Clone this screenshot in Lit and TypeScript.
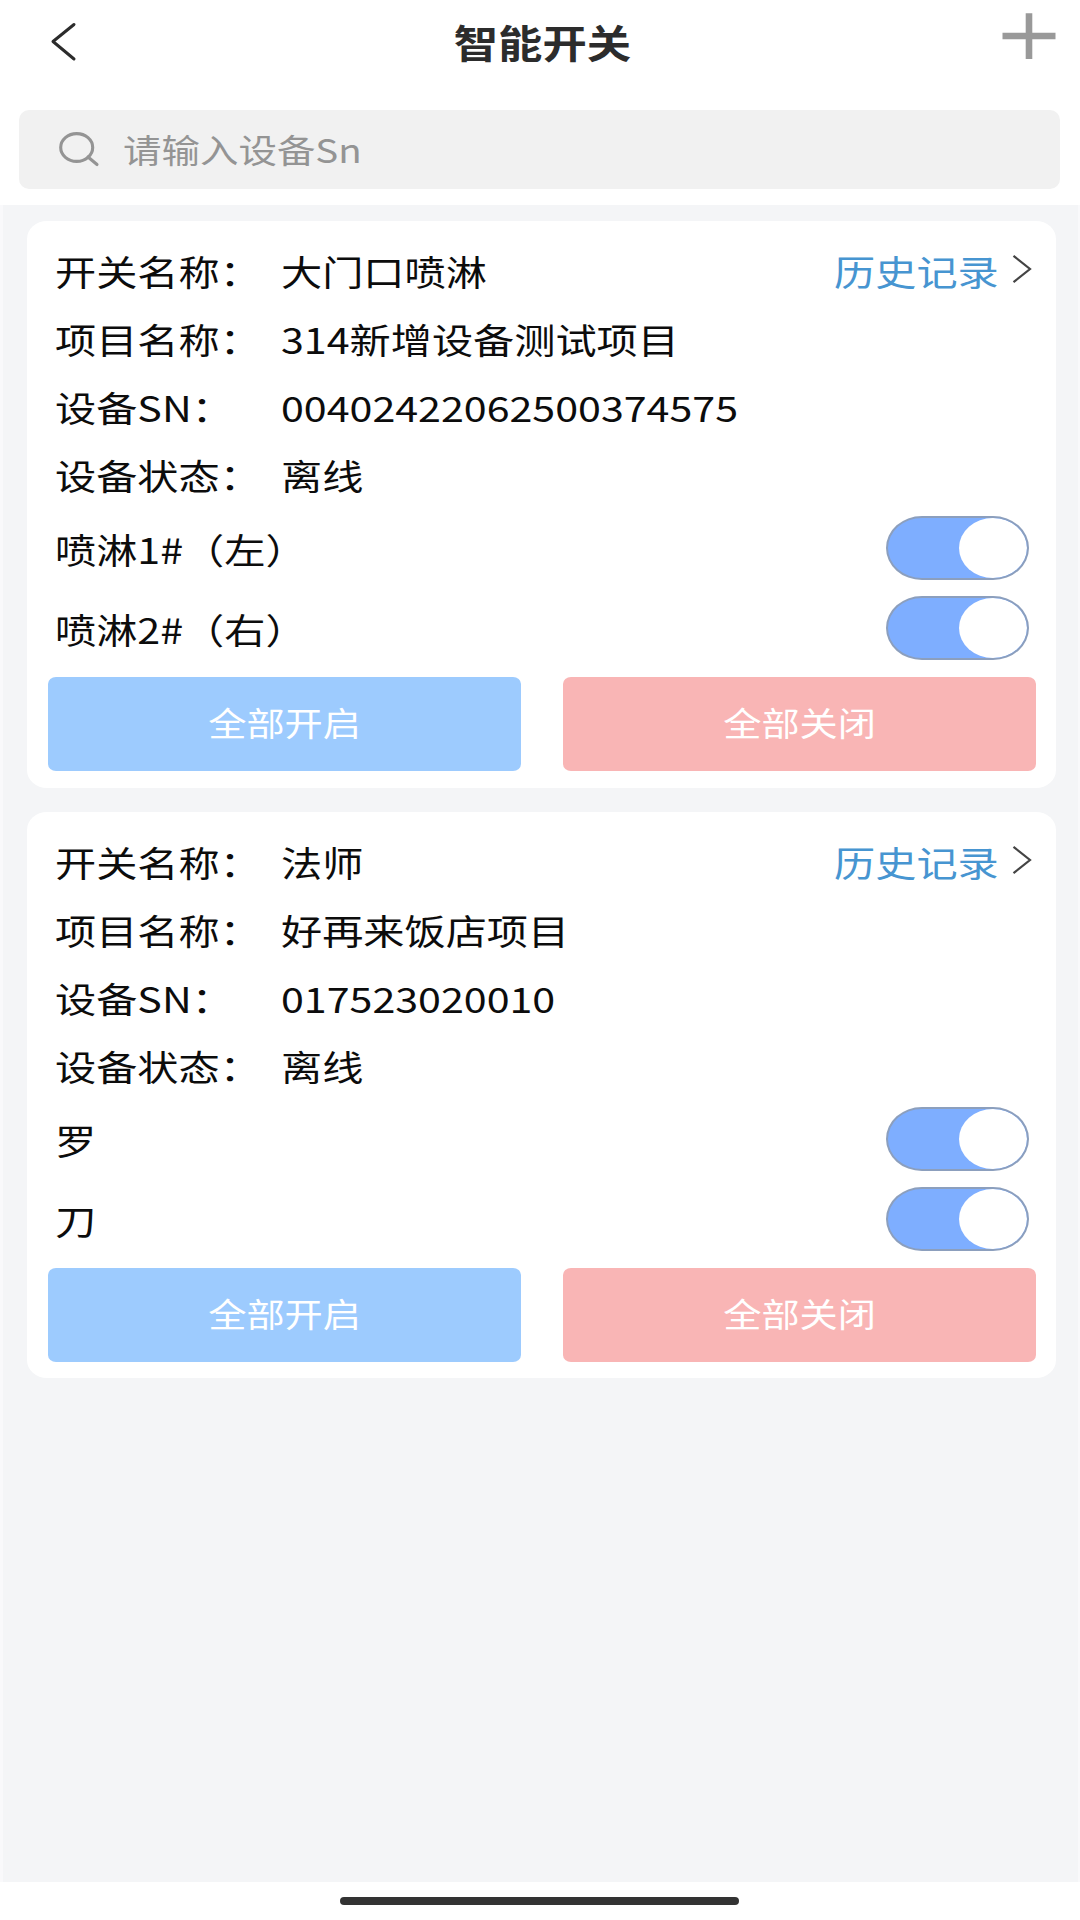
import { LitElement, html, css } from "lit";
import { customElement, property } from "lit/decorators.js";

interface Device {
  name: string;
  project: string;
  sn: string;
  status: string;
  switches: string[];
}

const DEVICES: Device[] = [
  {
    name: "大门口喷淋",
    project: "314新增设备测试项目",
    sn: "00402422062500374575",
    status: "离线",
    switches: ["喷淋1#（左）", "喷淋2#（右）"],
  },
  {
    name: "法师",
    project: "好再来饭店项目",
    sn: "017523020010",
    status: "离线",
    switches: ["罗", "刀"],
  },
];

@customElement("toggle-switch")
class ToggleSwitch extends LitElement {
  static styles = css`
    :host {
      display: block;
    }
    .track {
      box-sizing: border-box;
      display: flex;
      justify-content: flex-end;
      width: 143px;
      height: 64px;
      border: 2px solid #8c9fbd;
      border-radius: 36px / 32px;
      background: #7eaeff;
      overflow: hidden;
    }
    .knob {
      width: 68px;
      height: 60px;
      border-radius: 50%;
      background: #fff;
    }
  `;
  render() {
    return html`<div class="track"><div class="knob"></div></div>`;
  }
}

@customElement("device-card")
class DeviceCard extends LitElement {
  @property({ attribute: false }) device!: Device;

  static styles = css`
    :host {
      display: block;
    }
    .card {
      box-sizing: border-box;
      height: 566.5px;
      padding: 16px 20px 0 21px;
      border-radius: 20px / 18px;
      background: #fff;
    }
    .row {
      display: flex;
      align-items: center;
      height: 68px;
      padding: 0 7px;
    }
    .label {
      width: 226px;
      flex: none;
    }
    .value {
      flex: 1;
    }
    .text {
      display: inline-block;
      font-size: 35.2px;
      line-height: 68px;
      white-space: nowrap;
      color: #0c0c0c;
      transform: scaleX(1.17);
      transform-origin: left center;
    }
    .link {
      display: flex;
      align-items: center;
      gap: 13px;
    }
    .link .text {
      color: #4795d1;
      transform-origin: right center;
    }
    .arrow {
      display: block;
      width: 20px;
      height: 30px;
      margin: -4px -3px 0 0;
    }
    .switches {
      margin-top: -1px;
    }
    .switch-row {
      display: flex;
      align-items: center;
      justify-content: space-between;
      height: 80px;
      padding: 0 7px;
    }
    .switch-row .text {
      line-height: 78px;
      padding-top: 2px;
    }
    .buttons {
      display: flex;
      gap: 42px;
      margin-top: 9px;
    }
    .button {
      flex: 1;
      height: 94px;
      border-radius: 8px / 7px;
      color: #fff;
      text-align: center;
      font-size: 32.8px;
      line-height: 89px;
    }
    .button span {
      display: inline-block;
      transform: scaleX(1.165);
    }
    .on {
      background: #9dcbfe;
    }
    .off {
      background: #f9b5b5;
    }
  `;

  private field(label: string, value: string) {
    return html`<div class="label"><span class="text">${label}</span></div>
      <div class="value"><span class="text">${value}</span></div>`;
  }

  render() {
    const d = this.device;
    return html`<div class="card">
      <div class="row">
        ${this.field("开关名称：", d.name)}
        <div class="link">
          <span class="text">历史记录</span>
          <svg class="arrow" viewBox="0 0 20 30">
            <path d="M1.5 1.8 L18 15 L1.5 28.2" fill="none" stroke="#444" stroke-width="2.2" />
          </svg>
        </div>
      </div>
      <div class="row">${this.field("项目名称：", d.project)}</div>
      <div class="row">${this.field("设备SN：", d.sn)}</div>
      <div class="row">${this.field("设备状态：", d.status)}</div>
      <div class="switches">
        ${d.switches.map(
          (s) => html`<div class="switch-row">
            <span class="text">${s}</span><toggle-switch></toggle-switch>
          </div>`
        )}
      </div>
      <div class="buttons">
        <div class="button on"><span>全部开启</span></div>
        <div class="button off"><span>全部关闭</span></div>
      </div>
    </div>`;
  }
}

@customElement("app-root")
class AppRoot extends LitElement {
  static styles = css`
    :host {
      display: block;
      font-family: "Noto Sans CJK SC", sans-serif;
    }
    .page {
      display: flex;
      flex-direction: column;
      width: 1080px;
      height: 1920px;
      background: #fff;
      overflow: hidden;
    }
    .header {
      box-sizing: border-box;
      display: grid;
      grid-template-columns: 40px 1fr 60px;
      align-items: start;
      height: 110px;
      padding: 0 22px 0 46px;
    }
    .back {
      width: 34px;
      height: 44px;
      margin-top: 20px;
    }
    .title {
      text-align: center;
      color: #2c2c2c;
      font-size: 38.2px;
      font-weight: 700;
      line-height: 83px;
    }
    .title span {
      display: inline-block;
      transform: scaleX(1.16);
    }
    .plus {
      width: 56px;
      height: 50px;
      margin: 11px 0 0 2px;
    }
    .search {
      display: flex;
      align-items: center;
      height: 79px;
      margin: 0 20px 0 19px;
      padding-left: 37px;
      border-radius: 10px;
      background: #f1f1f1;
    }
    .magnifier {
      width: 46px;
      height: 40px;
    }
    .placeholder {
      display: inline-block;
      margin-left: 21px;
      color: #949494;
      font-size: 32.8px;
      line-height: 77px;
      height: 79px;
      transform: scaleX(1.173);
      transform-origin: left center;
    }
    .list {
      box-sizing: border-box;
      display: flex;
      flex-direction: column;
      gap: 24px;
      flex: 1;
      margin-top: 16px;
      padding: 16px 22px 0 24px;
      border: solid #f9f9fb;
      border-width: 0 2px 0 3px;
      background: #f4f5f7;
    }
    .home {
      display: flex;
      justify-content: center;
      height: 38px;
    }
    .bar {
      width: 399px;
      height: 8px;
      margin: 15px 1px 0 0;
      border-radius: 4px;
      background: #333;
    }
  `;

  render() {
    return html`<div class="page">
      <div class="header">
        <svg class="back" viewBox="0 0 34 44">
          <path d="M28 4.5 L7 21.5 L28 39" fill="none" stroke="#2c2c2c" stroke-width="3" stroke-linecap="round" stroke-linejoin="round" />
        </svg>
        <div class="title"><span>智能开关</span></div>
        <svg class="plus" viewBox="0 0 56 50">
          <path d="M2.5 25 H55.5 M29 2.3 V48" fill="none" stroke="#999" stroke-width="6.6" />
        </svg>
      </div>
      <div class="search">
        <svg class="magnifier" viewBox="0 0 46 40">
          <g fill="none" stroke="#949494" stroke-width="3.1" stroke-linecap="round">
            <ellipse cx="20.7" cy="17.5" rx="16" ry="13.9" />
            <path d="M32 27 L41 34.5" />
          </g>
        </svg>
        <span class="placeholder">请输入设备Sn</span>
      </div>
      <div class="list">
        ${DEVICES.map((d) => html`<device-card .device=${d}></device-card>`)}
      </div>
      <div class="home"><div class="bar"></div></div>
    </div>`;
  }
}
